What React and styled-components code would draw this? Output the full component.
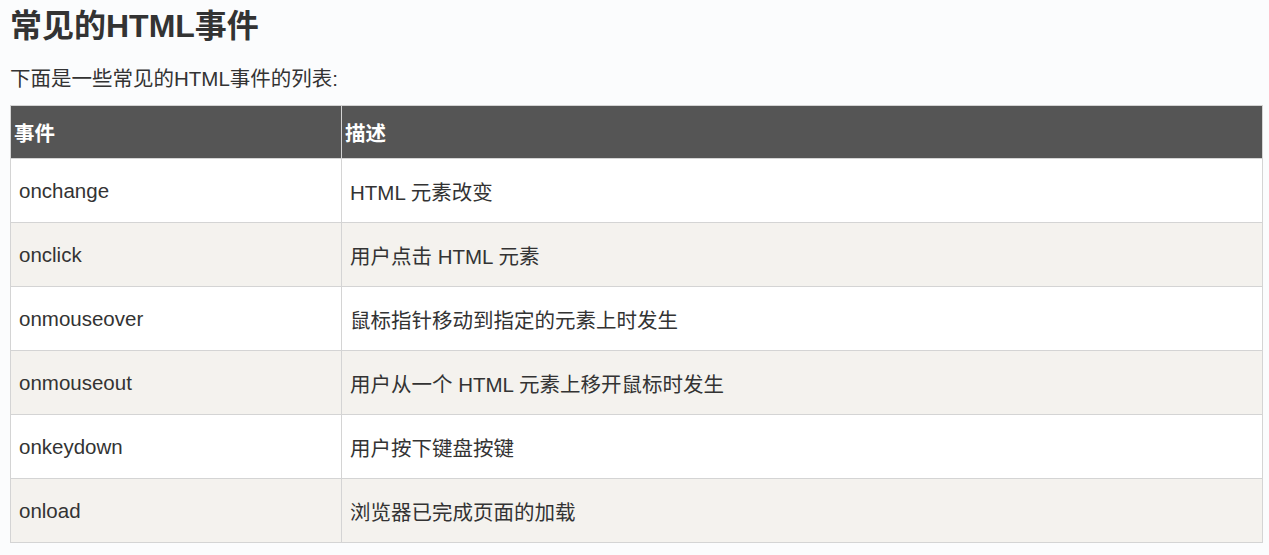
import React from "react";
import styled, { createGlobalStyle } from "styled-components";

const Global = createGlobalStyle`
body{
    margin: 0;
    background-color: #fbfcfd;
    font-family: "Liberation Sans", Arial, "Noto Sans CJK SC", sans-serif;
    color: #333;
}
`;

const rows = [
    ["onchange", "HTML 元素改变"],
    ["onclick", "用户点击 HTML 元素"],
    ["onmouseover", "鼠标指针移动到指定的元素上时发生"],
    ["onmouseout", "用户从一个 HTML 元素上移开鼠标时发生"],
    ["onkeydown", "用户按下键盘按键"],
    ["onload", "浏览器已完成页面的加载"],
];

export default function App() {
    return (
        <Page>
            <Global />
            <h1 className="title">常见的HTML事件</h1>
            <p className="intro">下面是一些常见的HTML事件的列表:</p>
            <Table>
                <thead>
                    <tr><th>事件</th><th>描述</th></tr>
                </thead>
                <tbody>
                    {rows.map(([ev, desc], i) => (
                        <Row key={ev} $odd={i % 2 === 1}>
                            <td>{ev}</td><td>{desc}</td>
                        </Row>
                    ))}
                </tbody>
            </Table>
        </Page>
    );
}

// styling of components
const Page = styled.div`
padding: 0 6px 0 10px;
.title{
    margin: 0;
    padding-top: 7px;
    font-size: 32px;
    line-height: 38px;
    font-weight: bold;
    color: #333;
}
.intro{
    margin: 0;
    padding-top: 21px;
    font-size: 20.5px;
    line-height: 26px;
    color: #333;
}
`;

const Table = styled.table`
margin-top: 13px;
width: 100%;
border-collapse: collapse;
font-size: 20.5px;
th{
    background-color: #555;
    color: #fff;
    text-align: left;
    font-weight: bold;
    height: 52px;
    padding: 0 3px;
    border: 1px solid #d4d4d4;
}
th:first-child, td:first-child{ width: 314px; }
td{
    height: 63px;
    padding: 0 8px;
    border: 1px solid #d4d4d4;
}
`;

const Row = styled.tr`
background-color: ${p => (p.$odd ? "#f4f2ee" : "#fff")};
`;
